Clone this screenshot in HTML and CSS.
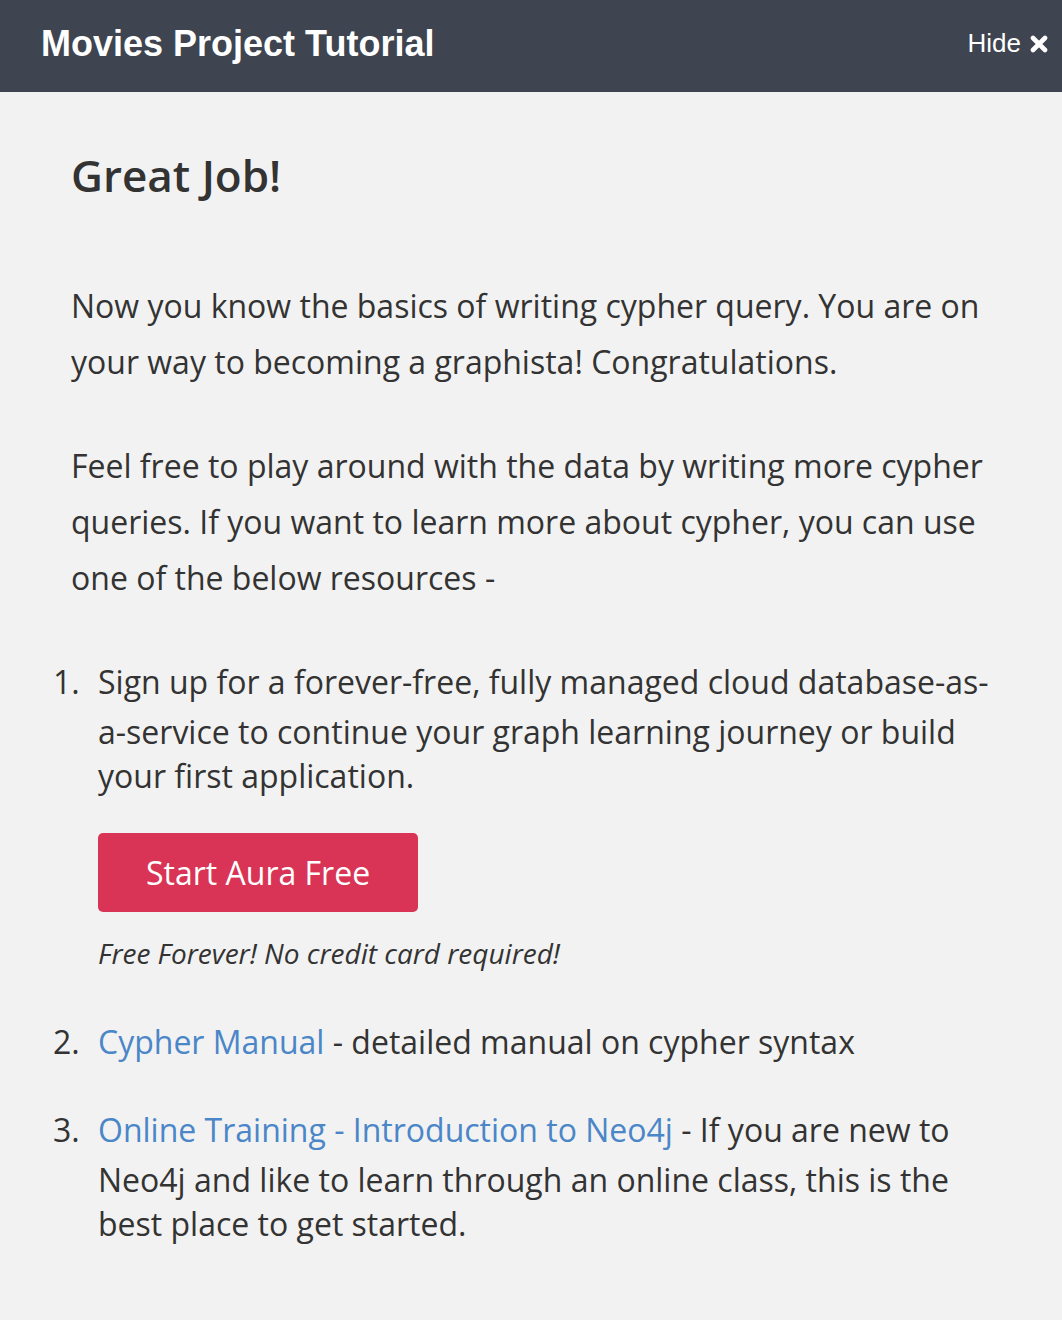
FILE: index.html
```html
<!DOCTYPE html>
<html lang="en">
<head>
<meta charset="utf-8">
<title>Movies Project Tutorial</title>
<link rel="stylesheet" href="styles.css">
</head>
<body>
<header class="topbar">
  <div class="topbar-title">Movies Project Tutorial</div>
  <div class="topbar-hide">Hide
    <svg class="hide-icon" width="18" height="18" viewBox="0 0 18 18" aria-hidden="true">
      <path d="M3 3 L15 15 M15 3 L3 15" stroke="#fff" stroke-width="4.6" stroke-linecap="round" fill="none"/>
    </svg>
  </div>
</header>
<main class="content">
  <h1 class="heading">Great Job!</h1>
  <p class="para">Now you know the basics of writing cypher query. You are on your way to becoming a graphista! Congratulations.</p>
  <p class="para">Feel free to play around with the data by writing more cypher queries. If you want to learn more about cypher, you can use one of the below resources -</p>
  <ol class="resources">
    <li class="res-item res-first">
      <div class="res-body">
        <div class="res-text">Sign up for a forever-free, fully managed cloud database-as-a-service to continue your graph learning journey or build your first application.</div>
        <a class="cta" href="#">Start Aura Free</a>
        <div class="cta-note">Free Forever! No credit card required!</div>
      </div>
    </li>
    <li class="res-item res-second">
      <div class="res-body">
        <div class="res-text"><a class="link" href="#">Cypher Manual</a> - detailed manual on cypher syntax</div>
      </div>
    </li>
    <li class="res-item res-third">
      <div class="res-body">
        <div class="res-text"><a class="link" href="#">Online Training - Introduction to Neo4j</a> - If you are new to Neo4j and like to learn through an online class, this is the best place to get started.</div>
      </div>
    </li>
  </ol>
</main>
</body>
</html>
```
FILE: styles.css
```css
html, body {
  margin: 0;
  padding: 0;
}
body {
  background: #f2f2f2;
  color: #333333;
  font-family: "Open Sans", "Noto Sans", sans-serif;
  font-size: 32px;
  line-height: 56px;
}
.topbar {
  height: 92px;
  background: #3e4450;
  display: flex;
  align-items: center;
  justify-content: space-between;
  padding: 0 14px 0 41px;
  box-sizing: border-box;
  color: #ffffff;
  font-family: "Liberation Sans", Arial, sans-serif;
}
.topbar-title {
  font-size: 36px;
  font-weight: bold;
  line-height: 40px;
  margin-top: -4px;
}
.topbar-hide {
  display: flex;
  align-items: center;
  gap: 9px;
  font-size: 26px;
  line-height: 30px;
  margin-top: -6px;
}
.hide-icon {
  display: block;
  margin-top: 2px;
}
.content {
  padding: 59px 62px 40px 71px;
}
.heading {
  margin: 0;
  font-size: 44px;
  font-weight: 600;
  line-height: 48px;
  color: #333333;
}
.para {
  margin: 79px 0 0 0;
}
.para + .para {
  margin-top: 48px;
}
.resources {
  margin: 48px 0 0 -18px;
  padding: 0;
  list-style: none;
  counter-reset: res;
}
.res-item {
  display: grid;
  grid-template-columns: 45px 1fr;
  counter-increment: res;
}
.res-item::before {
  content: counter(res) ".";
  line-height: 56px;
  color: #333333;
}
.res-text {
  line-height: 44px;
}
.res-text::before {
  content: "\200B";
  line-height: 56px;
}
.res-second {
  margin-top: 41px;
}
.res-third {
  margin-top: 32px;
}
.cta {
  display: inline-block;
  margin-top: 35px;
  background: #d93455;
  color: #ffffff;
  text-decoration: none;
  border-radius: 5px;
  padding: 17px 48px;
  line-height: 45px;
  font-size: 32px;
}
.cta-note {
  margin-top: 21px;
  font-style: italic;
  font-size: 28px;
  line-height: 40px;
  color: #333333;
}
.link {
  color: #4a86c8;
  text-decoration: none;
}
```
